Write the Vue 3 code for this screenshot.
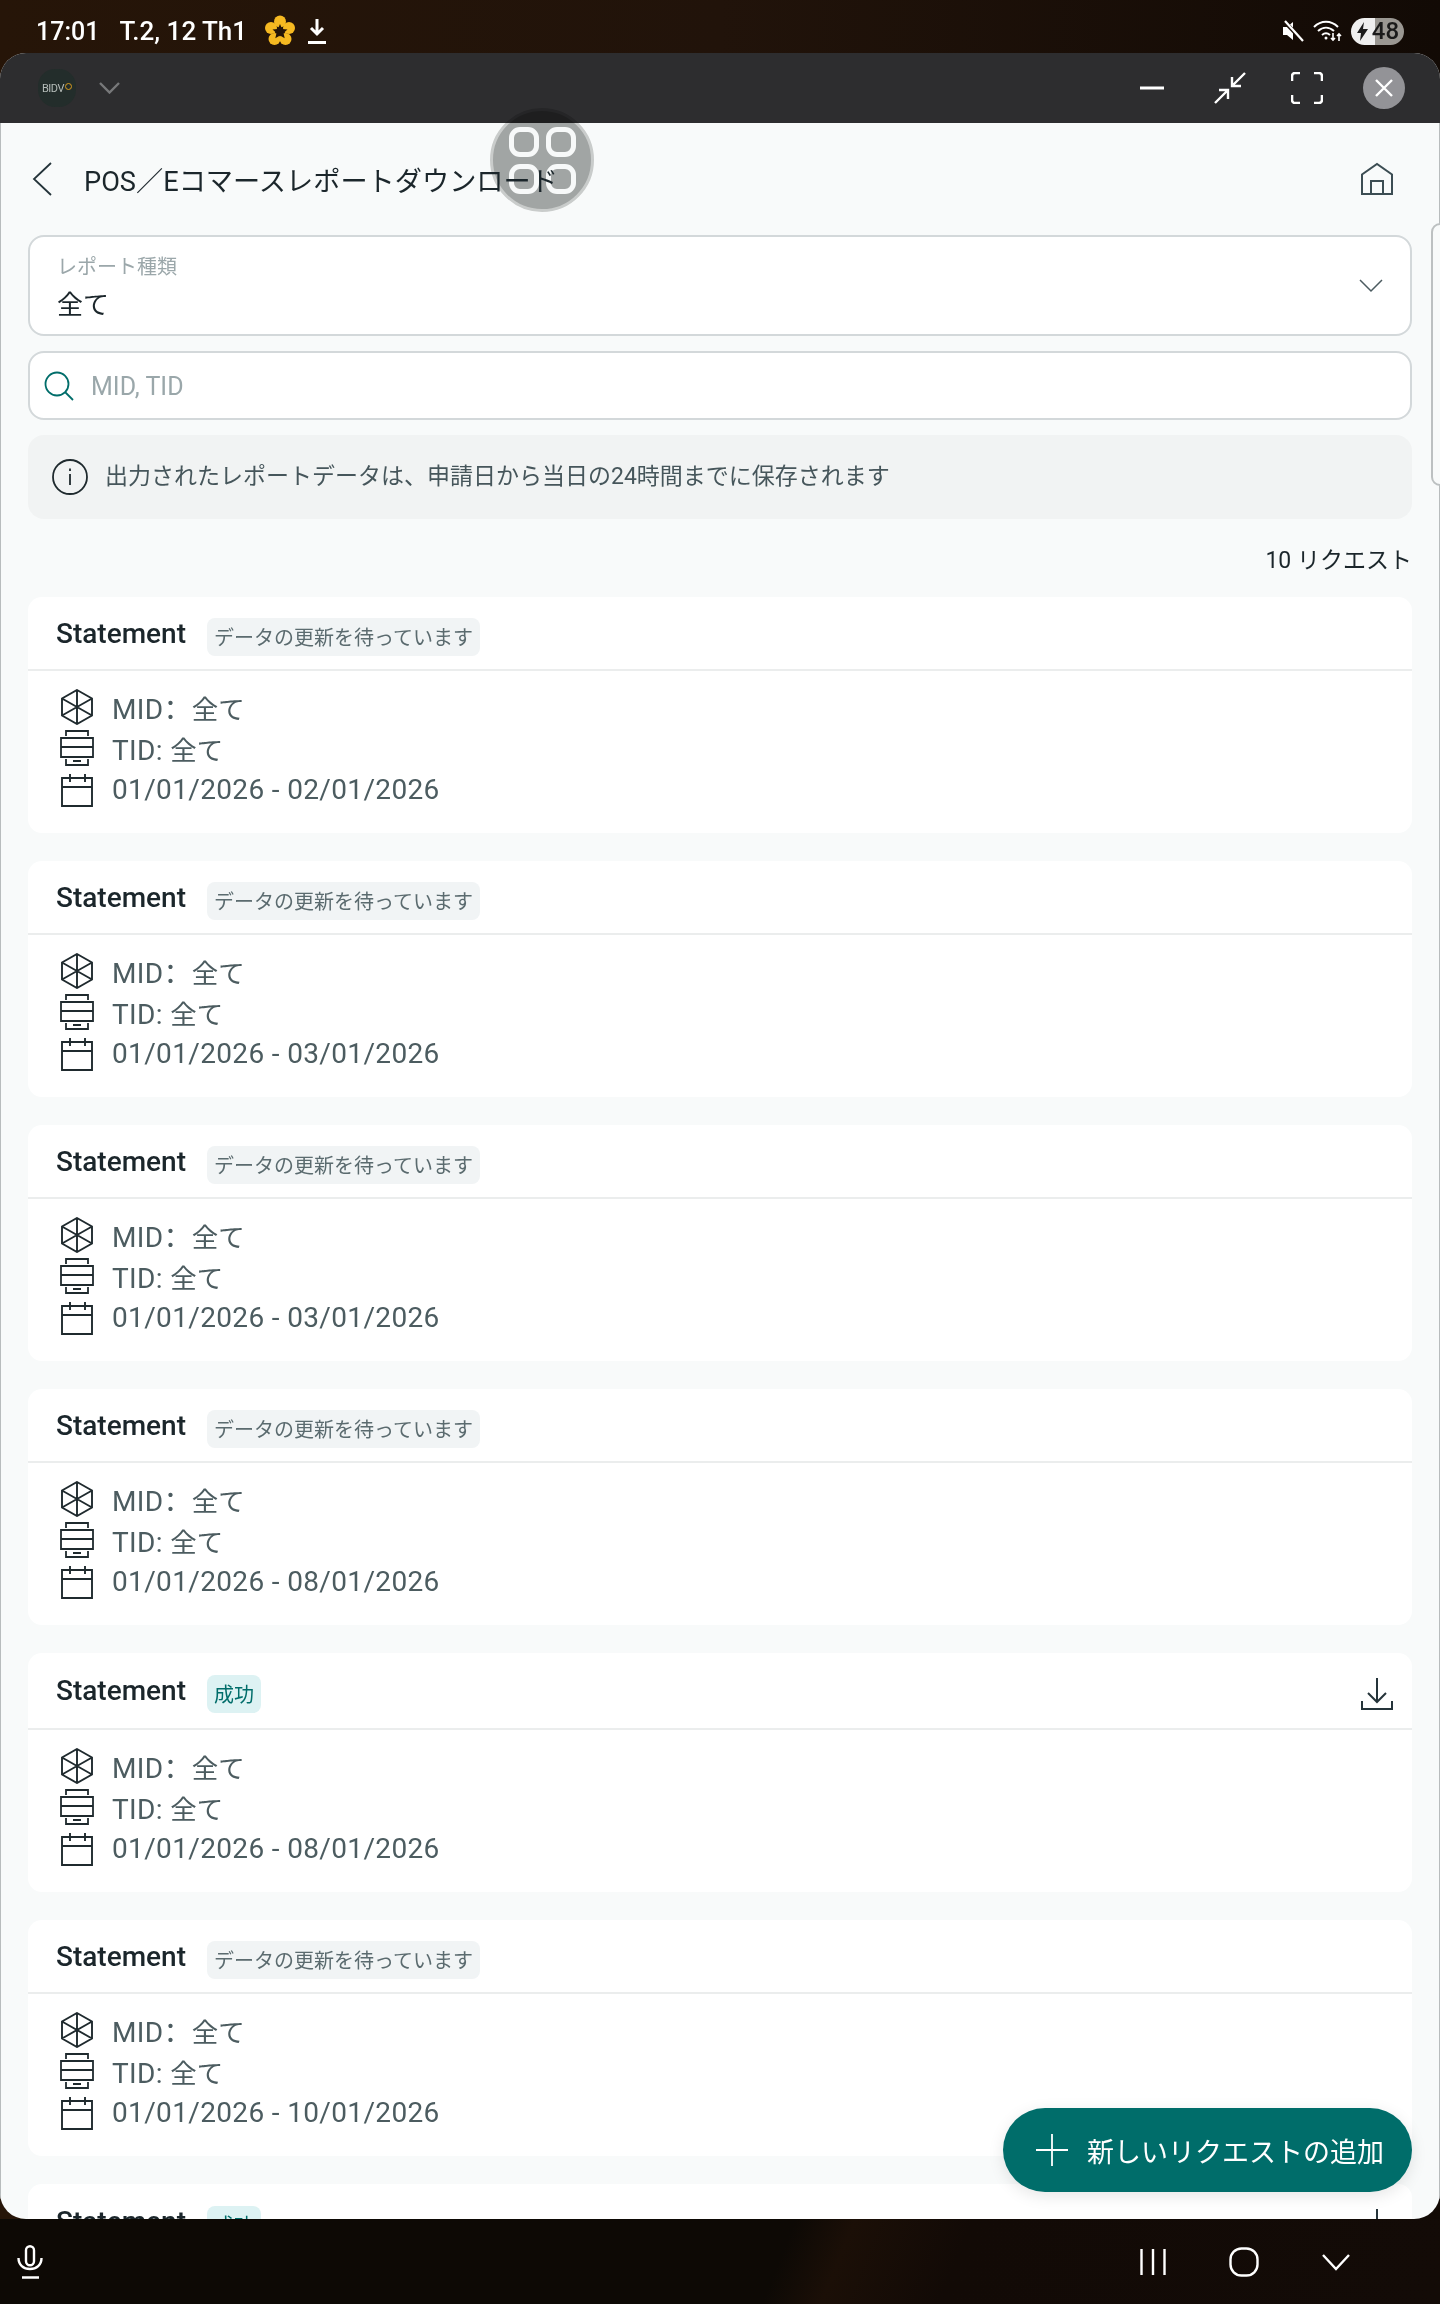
<script setup>
const cards = [
  { end: '02/01/2026', ok: false },
  { end: '03/01/2026', ok: false },
  { end: '03/01/2026', ok: false },
  { end: '08/01/2026', ok: false },
  { end: '08/01/2026', ok: true },
  { end: '10/01/2026', ok: false },
  { end: '10/01/2026', ok: true },
]
</script>

<template>
  <div class="screen">
    <header class="status">
      <div class="status-left">
        <span class="clock">17:01</span>
        <span class="date">T.2, 12 Th1</span>
        <svg class="flower" width="32" height="32" viewBox="0 0 32 32">
          <circle cx="16" cy="6.5" r="6" fill="#f6b921" />
          <circle cx="25" cy="13" r="6" fill="#f6b921" />
          <circle cx="21.5" cy="24" r="6" fill="#f6b921" />
          <circle cx="10.5" cy="24" r="6" fill="#f6b921" />
          <circle cx="7" cy="13" r="6" fill="#f6b921" />
          <path d="M16 9l2.2 5 5.3.5-4 3.5 1.2 5.2-4.700-2.700-4.700 2.700 1.200-5.200-4-3.500 5.300-.5z" fill="#241408" />
        </svg>
        <svg width="20" height="26" viewBox="0 0 20 26" fill="none" stroke="#fff" stroke-width="3">
          <path d="M10 1v14M4 10l6 6 6-6M1 24.500h18" />
        </svg>
      </div>
      <div class="status-right">
        <svg width="22" height="22" viewBox="0 0 22 22">
          <path d="M1 7h4l6-5v18l-6-5H1z" fill="#fff" />
          <path d="M2 1l19 20" stroke="#1a0f07" stroke-width="4" />
          <path d="M3 1l18 20" stroke="#fff" stroke-width="2.200" />
        </svg>
        <svg width="29" height="22" viewBox="0 0 29 22" fill="none" stroke="#fff" stroke-width="2">
          <path d="M1 7c7-7 17-7 24 0M5 11c5-4.500 11-4.500 16 0M9 15c3-2.500 5-2.500 8 0" />
          <circle cx="13" cy="18" r="1.500" fill="#fff" stroke="none" />
          <path d="M20 13v7M26 21v-7M24 16l2-2 2 2M18 18l2 2 2-2" stroke-width="1.600" />
        </svg>
        <div class="battery">
          <svg width="13" height="19" viewBox="0 0 13 19"><path d="M8 0L1 11h4l-1 8 8-12H7z" fill="#1c1c1c" /></svg>
          <span>48</span>
        </div>
      </div>
    </header>

    <div class="window">
      <div class="titlebar">
        <div class="brand">
          <div class="brand-logo">BIDV<i></i></div>
          <svg width="21" height="12" viewBox="0 0 21 12" fill="none" stroke="#77787a" stroke-width="2.400">
            <path d="M1 1l9.500 9.500L20 1" />
          </svg>
        </div>
        <div class="controls">
          <svg class="ctl-min" width="24" height="4" viewBox="0 0 24 4"><path d="M0 2h24" stroke="#fff" stroke-width="3" /></svg>
          <svg class="ctl-shrink" width="32" height="32" viewBox="0 0 32 32" fill="none" stroke="#fff" stroke-width="2.400">
            <path d="M31 1L18 14M18 5v9h9M1 31l13-13M5 18h9v9" />
          </svg>
          <svg class="ctl-full" width="32" height="32" viewBox="0 0 32 32" fill="none" stroke="#fff" stroke-width="2.600">
            <path d="M1 9V4a3 3 0 0 1 3-3h5M23 1h5a3 3 0 0 1 3 3v5M31 23v5a3 3 0 0 1-3 3h-5M9 31H4a3 3 0 0 1-3-3v-5" />
          </svg>
          <div class="ctl-close">
            <svg width="18" height="18" viewBox="0 0 18 18" stroke="#fff" stroke-width="2.400"><path d="M1 1l16 16M17 1L1 17" /></svg>
          </div>
        </div>
      </div>

      <main class="content">
        <div class="pagehead">
          <svg class="back" width="20" height="34" viewBox="0 0 20 34" fill="none" stroke="#25343a" stroke-width="1.800">
            <path d="M19 1L2 17l17 16" />
          </svg>
          <h1>POS／Eコマースレポートダウンロード</h1>
          <svg class="home" width="34" height="34" viewBox="0 0 34 34" fill="none" stroke="#3c4d53" stroke-width="2">
            <path d="M2 32V12.500L17 2l15 10.500V32zM11 32V19h12v13" />
          </svg>
        </div>

        <div class="select">
          <div class="select-text">
            <span class="select-label">レポート種類</span>
            <span class="select-value">全て</span>
          </div>
          <svg width="24" height="14" viewBox="0 0 24 14" fill="none" stroke="#4b5b60" stroke-width="1.500">
            <path d="M1 1l11 11L23 1" />
          </svg>
        </div>

        <div class="search">
          <svg width="30" height="30" viewBox="0 0 30 30" fill="none" stroke="#006d6a" stroke-width="1.800">
            <circle cx="13" cy="13" r="11.500" />
            <path d="M21 21l8 8" />
          </svg>
          <span>MID, TID</span>
        </div>

        <div class="info">
          <svg width="36" height="36" viewBox="0 0 36 36" fill="none" stroke="#1f2a2e" stroke-width="1.800">
            <circle cx="18" cy="18" r="17" />
            <path d="M18 15v11M18 9.500v2.500" />
          </svg>
          <span>出力されたレポートデータは、申請日から当日の24時間までに保存されます</span>
        </div>

        <div class="count">10 リクエスト</div>

        <div class="list">
          <section v-for="(c, i) in cards" :key="i" class="card">
            <div class="card-head" :class="{ tall: c.ok }">
              <strong>Statement</strong>
              <span class="badge" :class="{ ok: c.ok }">{{ c.ok ? '成功' : 'データの更新を待っています' }}</span>
              <svg v-if="c.ok" class="dl" width="32" height="32" viewBox="0 0 32 32" fill="none" stroke="#25343a" stroke-width="2">
                <path d="M16 0v24M7 15l9 9 9-9M1 23v8h30v-8" />
              </svg>
            </div>
            <div class="card-body">
              <div class="row">
                <svg width="34" height="36" viewBox="0 0 34 36" fill="none" stroke="#1f2a2e" stroke-width="1.900">
                  <path d="M17 1l15 8.500v17L17 35 2 26.500v-17zM17 1v34M2 9.500l30 17M32 9.500L2 26.500" />
                </svg>
                <span>MID<span class="colon">：</span><span class="cjk">全て</span></span>
              </div>
              <div class="row">
                <svg width="34" height="36" viewBox="0 0 34 36" fill="none" stroke="#1f2a2e" stroke-width="1.800">
                  <path d="M6 6V1h22v5M1 8h32v19H1zM1 17h32M6 29v6h22v-6M13 31h8" />
                </svg>
                <span>TID: <span class="cjk">全て</span></span>
              </div>
              <div class="row">
                <svg width="34" height="34" viewBox="0 0 34 34" fill="none" stroke="#1f2a2e" stroke-width="1.900">
                  <path d="M2 5h30v28H2zM2 14h30M10 1v8M25 1v8" />
                </svg>
                <span>01/01/2026 - {{ c.end }}</span>
              </div>
            </div>
          </section>
        </div>
      </main>

      <button class="fab" type="button">
        <svg width="32" height="32" viewBox="0 0 32 32" stroke="#fff" stroke-width="1.800"><path d="M16 0v32M0 16h32" /></svg>
        <span>新しいリクエストの追加</span>
      </button>
      <div class="edge-handle"></div>
    </div>

    <div class="bubble-disc"></div>
    <div class="bubble">
      <i></i><i></i><i></i><i></i>
    </div>

    <footer class="navbar">
      <svg width="26" height="34" viewBox="0 0 26 34" fill="none" stroke="#fff" stroke-width="2.400">
        <rect x="9" y="1.200" width="8" height="19" rx="4" />
        <path d="M1.500 13c0 7 5 11 11.500 11s11.500-4 11.500-11M5 32.500h17" />
      </svg>
      <div class="nav-keys">
        <svg width="26" height="28" viewBox="0 0 26 28" stroke="#fff" stroke-width="2.400"><path d="M1.500 1v26M13 1v26M24.500 1v26" /></svg>
        <svg width="30" height="30" viewBox="0 0 30 30" fill="none" stroke="#fff" stroke-width="2.400"><rect x="1.500" y="1.500" width="27" height="27" rx="11" /></svg>
        <svg width="28" height="18" viewBox="0 0 28 18" fill="none" stroke="#fff" stroke-width="2.400"><path d="M1 2l13 14L27 2" /></svg>
      </div>
    </footer>
  </div>
</template>

<style>
body { margin: 0; background: #0f0a06; }
</style>

<style scoped>
.screen {
  position: relative;
  width: 1440px;
  height: 2304px;
  overflow: hidden;
  display: flex;
  flex-direction: column;
  background: linear-gradient(90deg, #261508 0%, #21130a 50%, #120a05 100%);
  font-family: Roboto, "Noto Sans CJK JP", sans-serif;
}
.status {
  height: 53px;
  flex: none;
  display: flex;
  justify-content: space-between;
  align-items: center;
  padding: 9px 36px 0 36px;
  box-sizing: border-box;
  color: #fff;
}
.status-left { display: flex; align-items: center; font-size: 25px; font-weight: 500; }
.date { margin-left: 20px; font-size: 26px; }
.flower { margin: 0 11px 0 17px; }
.status-right { display: flex; align-items: center; gap: 9px; }
.battery {
  width: 53px;
  height: 27px;
  border-radius: 14px;
  display: flex;
  align-items: center;
  justify-content: center;
  gap: 3px;
  color: #1a1a1a;
  font-size: 24px;
  font-weight: 500;
  background: linear-gradient(90deg, #efefef 0 46%, #9a9792 46% 100%);
}
.window {
  position: relative;
  height: 2166px;
  flex: none;
  overflow: hidden;
  border-radius: 26px;
  background: #f8fafa;
}
.titlebar {
  height: 70px;
  background: #2d2d2f;
  display: flex;
  align-items: center;
  justify-content: space-between;
  padding: 0 35px 0 38px;
}
.brand { display: flex; align-items: center; gap: 23px; }
.brand-logo {
  width: 38px;
  height: 38px;
  border-radius: 17px;
  background: #232d2b;
  display: flex;
  align-items: center;
  justify-content: center;
  color: #b5bcb9;
  font-size: 11px;
  letter-spacing: -0.5px;
}
.brand-logo i {
  width: 5px;
  height: 5px;
  margin: -4px 0 0 1px;
  border: 1.500px solid #d89a1f;
  border-radius: 50%;
}
.controls { display: flex; align-items: center; }
.ctl-min { margin-right: 50px; }
.ctl-shrink { margin-right: 45px; }
.ctl-full { margin-right: 40px; }
.ctl-close {
  width: 42px;
  height: 42px;
  border-radius: 50%;
  background: #939397;
  display: flex;
  align-items: center;
  justify-content: center;
}
.content {
  padding: 0 27px;
  border-left: 1px solid #b8bcbd;
  border-right: 1px solid #b8bcbd;
  box-sizing: border-box;
}
.pagehead {
  height: 112px;
  display: flex;
  align-items: center;
}
.back { margin-left: 4px; }
.pagehead h1 {
  position: relative;
  z-index: 3;
  margin: 0 0 0 32px;
  font-size: 27.200px;
  font-weight: 400;
  color: #1b262b;
}
.home { margin-left: auto; margin-right: 18px; }
.select {
  height: 101px;
  box-sizing: border-box;
  border: 2px solid #d3d8da;
  border-radius: 16px;
  background: #fff;
  display: flex;
  align-items: center;
  justify-content: space-between;
  padding: 0 27px;
}
.select-text { display: flex; flex-direction: column; }
.select-label { font-size: 20px; line-height: 28px; color: #9ba7aa; }
.select-value { font-size: 26px; line-height: 38px; color: #1b262b; margin-top: 5px; margin-bottom: -5px; }
.search {
  height: 69px;
  margin-top: 15px;
  box-sizing: border-box;
  border: 2px solid #d3d8da;
  border-radius: 16px;
  background: #fff;
  display: flex;
  align-items: center;
  gap: 17px;
  padding: 0 14px;
  font-size: 25px;
  color: #9aa7aa;
}
.search span { padding-top: 2px; }
.info {
  height: 84px;
  margin-top: 15px;
  border-radius: 16px;
  background: #f1f3f3;
  display: flex;
  align-items: center;
  gap: 18px;
  padding: 0 23px 0 24px;
  font-size: 23px;
  color: #46565b;
}
.info span { padding-bottom: 7px; margin-left: -1px; }
.count {
  height: 78px;
  display: flex;
  align-items: center;
  justify-content: flex-end;
  font-size: 23px;
  color: #1b262b;
}
.list { display: flex; flex-direction: column; gap: 28px; }
.card { background: #fff; border-radius: 14px; flex: none; }
.card-head {
  height: 74px;
  box-sizing: border-box;
  border-bottom: 2px solid #ebeded;
  display: flex;
  align-items: center;
  padding: 0 19px 0 28px;
}
.card-head.tall { height: 77px; }
.card-head strong { font-size: 28px; font-weight: 500; color: #1b262b; }
.badge {
  margin-left: 21px;
  margin-top: 7px;
  height: 38px;
  padding: 0 7px;
  border-radius: 8px;
  background: #f1f4f5;
  color: #5b6b6f;
  font-size: 20px;
  line-height: 40px;
}
.badge.ok { background: #ddf2f3; color: #006d6a; }
.dl { margin-left: auto; margin-top: 6px; }
.card-body { padding: 15px 32px 0; height: 162px; box-sizing: border-box; }
.row {
  height: 41.500px;
  display: flex;
  align-items: center;
  gap: 18px;
  font-size: 28px;
  color: #4c5c60;
  letter-spacing: 0.35px;
}
.row .colon { font-family: "Noto Sans CJK SC", sans-serif; }
.row .cjk { font-size: 26.500px; letter-spacing: 0; }
.fab {
  position: absolute;
  right: 28px;
  bottom: 27px;
  width: 409px;
  height: 84px;
  border: 0;
  border-radius: 42px;
  background: #006d6a;
  color: #fff;
  display: flex;
  align-items: center;
  gap: 19px;
  padding: 0 0 0 33px;
  font-family: inherit;
  font-size: 27px;
  box-sizing: border-box;
  box-shadow: 0 4px 16px rgba(0, 0, 0, 0.1);
}
.edge-handle {
  position: absolute;
  right: -9px;
  top: 170px;
  width: 18px;
  height: 263px;
  box-sizing: border-box;
  border: 2px solid #bcc0c1;
  border-radius: 10px;
  background: #f8fafa;
}
.bubble-disc {
  position: absolute;
  left: 490px;
  top: 108px;
  width: 104px;
  height: 104px;
  box-sizing: border-box;
  border: 3px solid #cfd0cf;
  border-radius: 50%;
  background: #a6a8a7;
  mix-blend-mode: multiply;
}
.bubble {
  position: absolute;
  left: 490px;
  top: 108px;
  width: 104px;
  height: 104px;
  z-index: 1;
  display: grid;
  grid-template-columns: 30px 30px;
  grid-template-rows: 30px 30px;
  gap: 7px;
  justify-content: center;
  align-content: center;
}
.bubble i {
  box-sizing: border-box;
  border: 5px solid #f7f9f9;
  border-radius: 11px;
}
.navbar {
  flex: 1;
  display: flex;
  align-items: center;
  justify-content: space-between;
  padding: 0 90px 0 17px;
  background: linear-gradient(112deg, #0d0905 0 54%, #1b0f07 58%, #120a06 66%, #130b07 100%);
}
.nav-keys { display: flex; align-items: center; gap: 63px; }
</style>
